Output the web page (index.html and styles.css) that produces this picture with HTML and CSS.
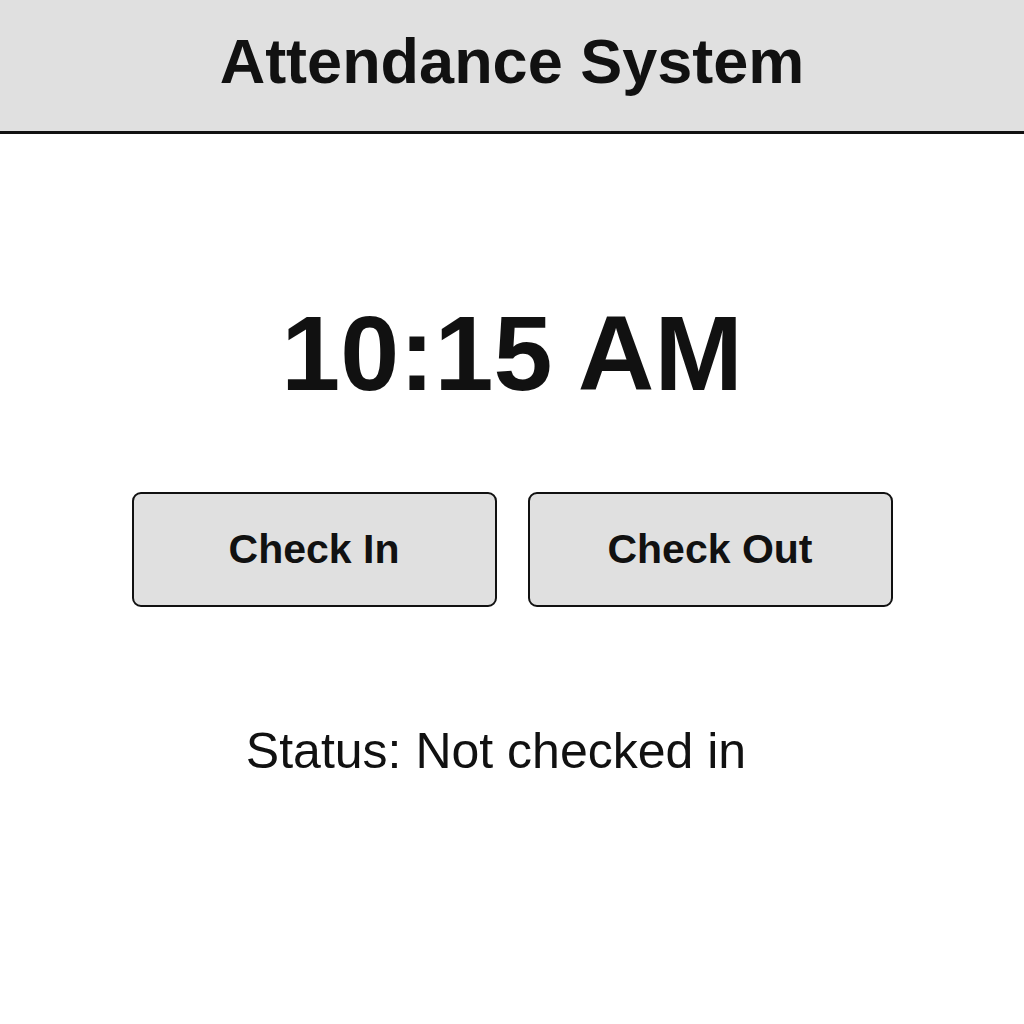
FILE: index.html
```html
<!DOCTYPE html>
<html lang="en">
<head>
<meta charset="utf-8">
<title>Attendance System</title>
<link rel="stylesheet" href="styles.css">
</head>
<body>
<header class="app-header">
  <h1 class="app-title">Attendance System</h1>
</header>
<main class="app-main">
  <div class="clock">10:15 AM</div>
  <div class="actions">
    <button class="btn" type="button">Check In</button>
    <button class="btn" type="button">Check Out</button>
  </div>
  <p class="status">Status: Not checked in</p>
</main>
</body>
</html>
```
FILE: styles.css
```css
html, body {
  margin: 0;
  padding: 0;
  background: #ffffff;
  color: #111111;
  font-family: "Liberation Sans", Arial, sans-serif;
}

.app-header {
  height: 134px;
  box-sizing: border-box;
  padding-bottom: 10px;
  background: #e0e0e0;
  border-bottom: 3px solid #111111;
  display: flex;
  align-items: center;
  justify-content: center;
}

.app-title {
  margin: 0;
  font-size: 63px;
  font-weight: 700;
  color: #111111;
}

.app-main {
  display: flex;
  flex-direction: column;
  align-items: center;
}

.clock {
  margin-top: 166px;
  font-size: 106px;
  line-height: 1;
  font-weight: 700;
  color: #111111;
}

.actions {
  margin-top: 86px;
  display: flex;
  gap: 31px;
}

.btn {
  width: 365px;
  height: 115px;
  background: #e0e0e0;
  border: 2px solid #111111;
  border-radius: 9px;
  font-family: "Liberation Sans", Arial, sans-serif;
  font-size: 41px;
  font-weight: 700;
  color: #111111;
  padding: 0;
}

.status {
  margin: 119px 0 0 -32px;
  font-size: 50px;
  line-height: 1;
  color: #111111;
}
```
